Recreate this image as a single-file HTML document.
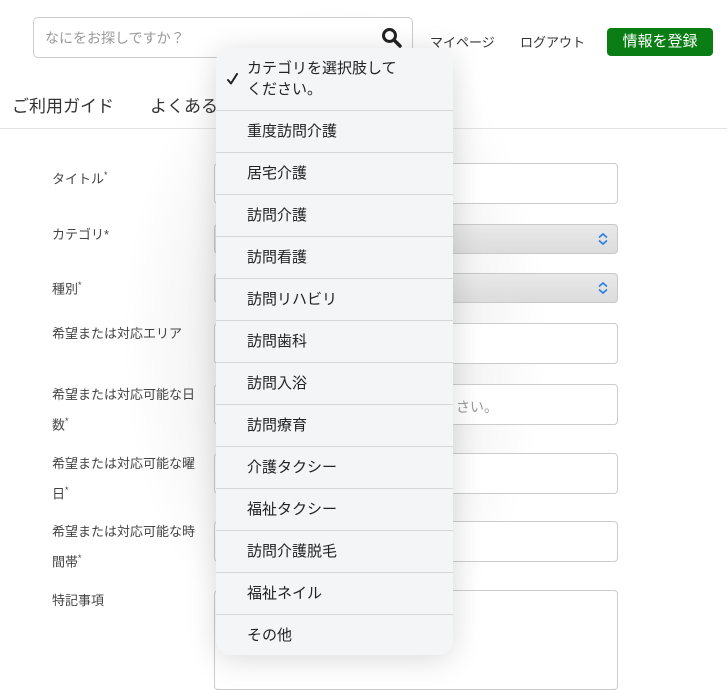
<!DOCTYPE html>
<html><head><meta charset="utf-8"><style>
*{box-sizing:border-box;margin:0;padding:0}
body{width:727px;height:675px;overflow:hidden;position:relative;background:#fff;font-family:"Liberation Sans","Noto Sans CJK JP",sans-serif;color:#333}
.a{position:absolute}
.shade{position:absolute;left:120px;top:0;width:430px;height:675px;background:radial-gradient(ellipse at center,rgba(0,0,0,0.07) 30%,rgba(0,0,0,0) 70%)}
.lab{position:absolute;left:52px;font-size:13px;color:#444;line-height:26px}
.lab sup{font-size:9px}
.inp{position:absolute;left:214px;width:404px;border:1px solid #ccc;border-radius:4px;background:#fff}
.sel{background:linear-gradient(#e9e9e9,#dcdcdc);border-color:#c8c8c8}
.menu{position:absolute;left:216px;top:48px;width:237px;height:607px;background:#f4f5f6;border-radius:14px;box-shadow:0 4px 30px rgba(0,0,0,0.15);overflow:hidden}
.it{height:42px;border-top:1px solid #d6d6d6;font-size:15px;color:#222;padding-left:31px;line-height:42px}
</style></head><body>
<div class="shade"></div>
<div class="a" style="left:33px;top:17px;width:380px;height:41px;border:1px solid #ccc;border-radius:5px;background:#fff"></div>
<div class="a" style="left:45px;top:28px;font-size:14px;color:#999">なにをお探しですか？</div>
<svg class="a" style="left:381px;top:27px" width="22" height="22" viewBox="0 0 22 22"><circle cx="8.5" cy="8.5" r="6" fill="none" stroke="#222" stroke-width="3"/><line x1="13" y1="13" x2="19" y2="19" stroke="#222" stroke-width="3.5" stroke-linecap="round"/></svg>
<div class="a" style="left:430px;top:32px;font-size:13px;color:#333">マイページ</div>
<div class="a" style="left:520px;top:32px;font-size:13px;color:#333">ログアウト</div>
<div class="a" style="left:607px;top:28px;width:106px;height:28px;background:#0a7d14;border-radius:4px;color:#fff;font-size:15px;text-align:center;line-height:28px">情報を登録</div>
<div class="a" style="left:12px;top:92px;font-size:17px;color:#333">ご利用ガイド</div>
<div class="a" style="left:150px;top:92px;font-size:17px;color:#333">よくある</div>
<div class="a" style="left:0;top:128px;width:727px;height:1px;background:#e2e2e2"></div>

<div class="lab" style="top:162px">タイトル<sup>*</sup></div>
<div class="lab" style="top:222px">カテゴリ*</div>
<div class="lab" style="top:272px">種別<sup>*</sup></div>
<div class="lab" style="top:321px">希望または対応エリア</div>
<div class="lab" style="top:382px">希望または対応可能な日<br>数<sup>*</sup></div>
<div class="lab" style="top:451px">希望または対応可能な曜<br>日<sup>*</sup></div>
<div class="lab" style="top:519px">希望または対応可能な時<br>間帯<sup>*</sup></div>
<div class="lab" style="top:588px">特記事項</div>

<div class="inp" style="top:163px;height:41px"></div>
<div class="inp sel" style="top:224px;height:30px"></div>
<div class="inp sel" style="top:273px;height:30px"></div>
<svg class="a" style="left:597px;top:232px" width="12" height="14"><path d="M2 5.5L6 2L10 5.5M2 8.5L6 12L10 8.5" fill="none" stroke="#2a7de1" stroke-width="1.6"/></svg>
<svg class="a" style="left:597px;top:281px" width="12" height="14"><path d="M2 5.5L6 2L10 5.5M2 8.5L6 12L10 8.5" fill="none" stroke="#2a7de1" stroke-width="1.6"/></svg>
<div class="inp" style="top:323px;height:41px"></div>
<div class="inp" style="top:384px;height:41px"></div>
<div class="a" style="left:456px;top:397px;font-size:14px;color:#999">さい。</div>
<div class="inp" style="top:453px;height:41px"></div>
<div class="inp" style="top:521px;height:41px"></div>
<div class="inp" style="top:590px;height:100px"></div>

<div class="menu">
<div style="height:62px;position:relative;padding:10px 0 0 31px;font-size:15px;line-height:21px;color:#222">
<svg style="position:absolute;left:11px;top:25px" width="11" height="12" viewBox="0 0 11 12"><path d="M1 7L4 10.5L10 1" fill="none" stroke="#222" stroke-width="2" stroke-linecap="round" stroke-linejoin="round"/></svg>カテゴリを選択肢して<br>ください。</div>
<div class="it">重度訪問介護</div>
<div class="it">居宅介護</div>
<div class="it">訪問介護</div>
<div class="it">訪問看護</div>
<div class="it">訪問リハビリ</div>
<div class="it">訪問歯科</div>
<div class="it">訪問入浴</div>
<div class="it">訪問療育</div>
<div class="it">介護タクシー</div>
<div class="it">福祉タクシー</div>
<div class="it">訪問介護脱毛</div>
<div class="it">福祉ネイル</div>
<div class="it">その他</div>
</div>
</body></html>
